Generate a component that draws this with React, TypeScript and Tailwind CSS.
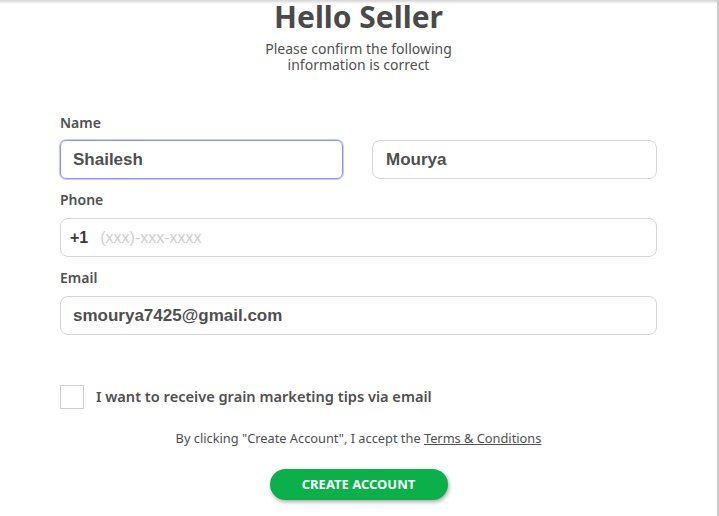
import React, { useState } from "react";

const ui = { fontFamily: '"Noto Sans", "Open Sans", sans-serif' };
const field = { fontFamily: '"Liberation Sans", Arial, sans-serif' };

const Label = ({ children }: { children: React.ReactNode }) => (
  <label className="block text-[14px] font-semibold text-[#505050] leading-[18px]" style={ui}>
    {children}
  </label>
);

export default function App() {
  const [first, setFirst] = useState("Shailesh");
  const [last, setLast] = useState("Mourya");
  const [phone, setPhone] = useState("");
  const [email, setEmail] = useState("smourya7425@gmail.com");
  const [tips, setTips] = useState(false);

  return (
    <div className="relative min-h-[516px] w-[719px] bg-white border-r-2 border-[#c8c8c8] overflow-hidden">
      {/* top shadow */}
      <div className="absolute inset-x-0 top-0 h-[4px] bg-gradient-to-b from-[#d4d4d4] to-white" />

      <div className="flex flex-col items-center" style={ui}>
        <h1 className="text-[30px] font-bold leading-[34px] text-[#4a4a4a]">Hello Seller</h1>
        <p className="mt-[7px] text-center text-[14px] leading-[16px] text-[#505050]">
          Please confirm the following
          <br />
          information is correct
        </p>
      </div>

      <form className="mt-[41px] px-[60px] w-[717px]" onSubmit={(e) => e.preventDefault()}>
        <Label>Name</Label>
        <div className="mt-[8px] flex gap-[29px]">
          <input
            value={first}
            onChange={(e) => setFirst(e.target.value)}
            className="h-[39px] flex-1 min-w-0 rounded-[6px] border border-[#8e95f0] ring-1 ring-[#c7cbfa] px-[12px] text-[17px] font-bold text-[#4f4f4f] outline-none"
            style={field}
          />
          <input
            value={last}
            onChange={(e) => setLast(e.target.value)}
            className="h-[39px] flex-1 min-w-0 rounded-[8px] border border-[#d6d6d6] px-[13px] text-[17px] font-bold text-[#4f4f4f] outline-none"
            style={field}
          />
        </div>

        <div className="mt-[12px]">
          <Label>Phone</Label>
        </div>
        <div className="mt-[9px] flex h-[39px] items-center rounded-[8px] border border-[#d6d6d6] px-[9px]" style={field}>
          <span className="text-[16px] font-bold text-[#3a3a3a]">+1</span>
          <input
            value={phone}
            onChange={(e) => setPhone(e.target.value)}
            placeholder="(xxx)-xxx-xxxx"
            className="ml-[12px] flex-1 text-[16px] text-[#4f4f4f] outline-none placeholder:text-[#cfcfcf]"
            style={field}
          />
        </div>

        <div className="mt-[12px]">
          <Label>Email</Label>
        </div>
        <input
          value={email}
          onChange={(e) => setEmail(e.target.value)}
          className="mt-[9px] block h-[39px] w-full rounded-[8px] border border-[#d6d6d6] px-[12px] text-[17px] font-bold text-[#4f4f4f] outline-none"
          style={field}
        />

        <label className="mt-[50px] flex items-center gap-[12px] cursor-pointer" style={ui}>
          <input
            type="checkbox"
            checked={tips}
            onChange={(e) => setTips(e.target.checked)}
            className="h-[24px] w-[24px] appearance-none border border-[#d0d0d0] bg-white checked:bg-[#0bb04b]"
          />
          <span className="text-[14.6px] font-semibold text-[#505050]">I want to receive grain marketing tips via email</span>
        </label>

        <p className="mt-[20px] text-center text-[12.8px] text-[#505050]" style={ui}>
          By clicking "Create Account", I accept the{" "}
          <a href="#" className="underline">Terms &amp; Conditions</a>
        </p>

        <div className="mt-[21px] flex justify-center">
          <button
            type="submit"
            className="h-[31px] w-[178px] rounded-full bg-[#0bb04b] text-[13px] font-bold text-white shadow-[1px_2px_4px_rgba(0,0,0,0.35)]"
            style={ui}
          >
            CREATE ACCOUNT
          </button>
        </div>
      </form>
    </div>
  );
}
